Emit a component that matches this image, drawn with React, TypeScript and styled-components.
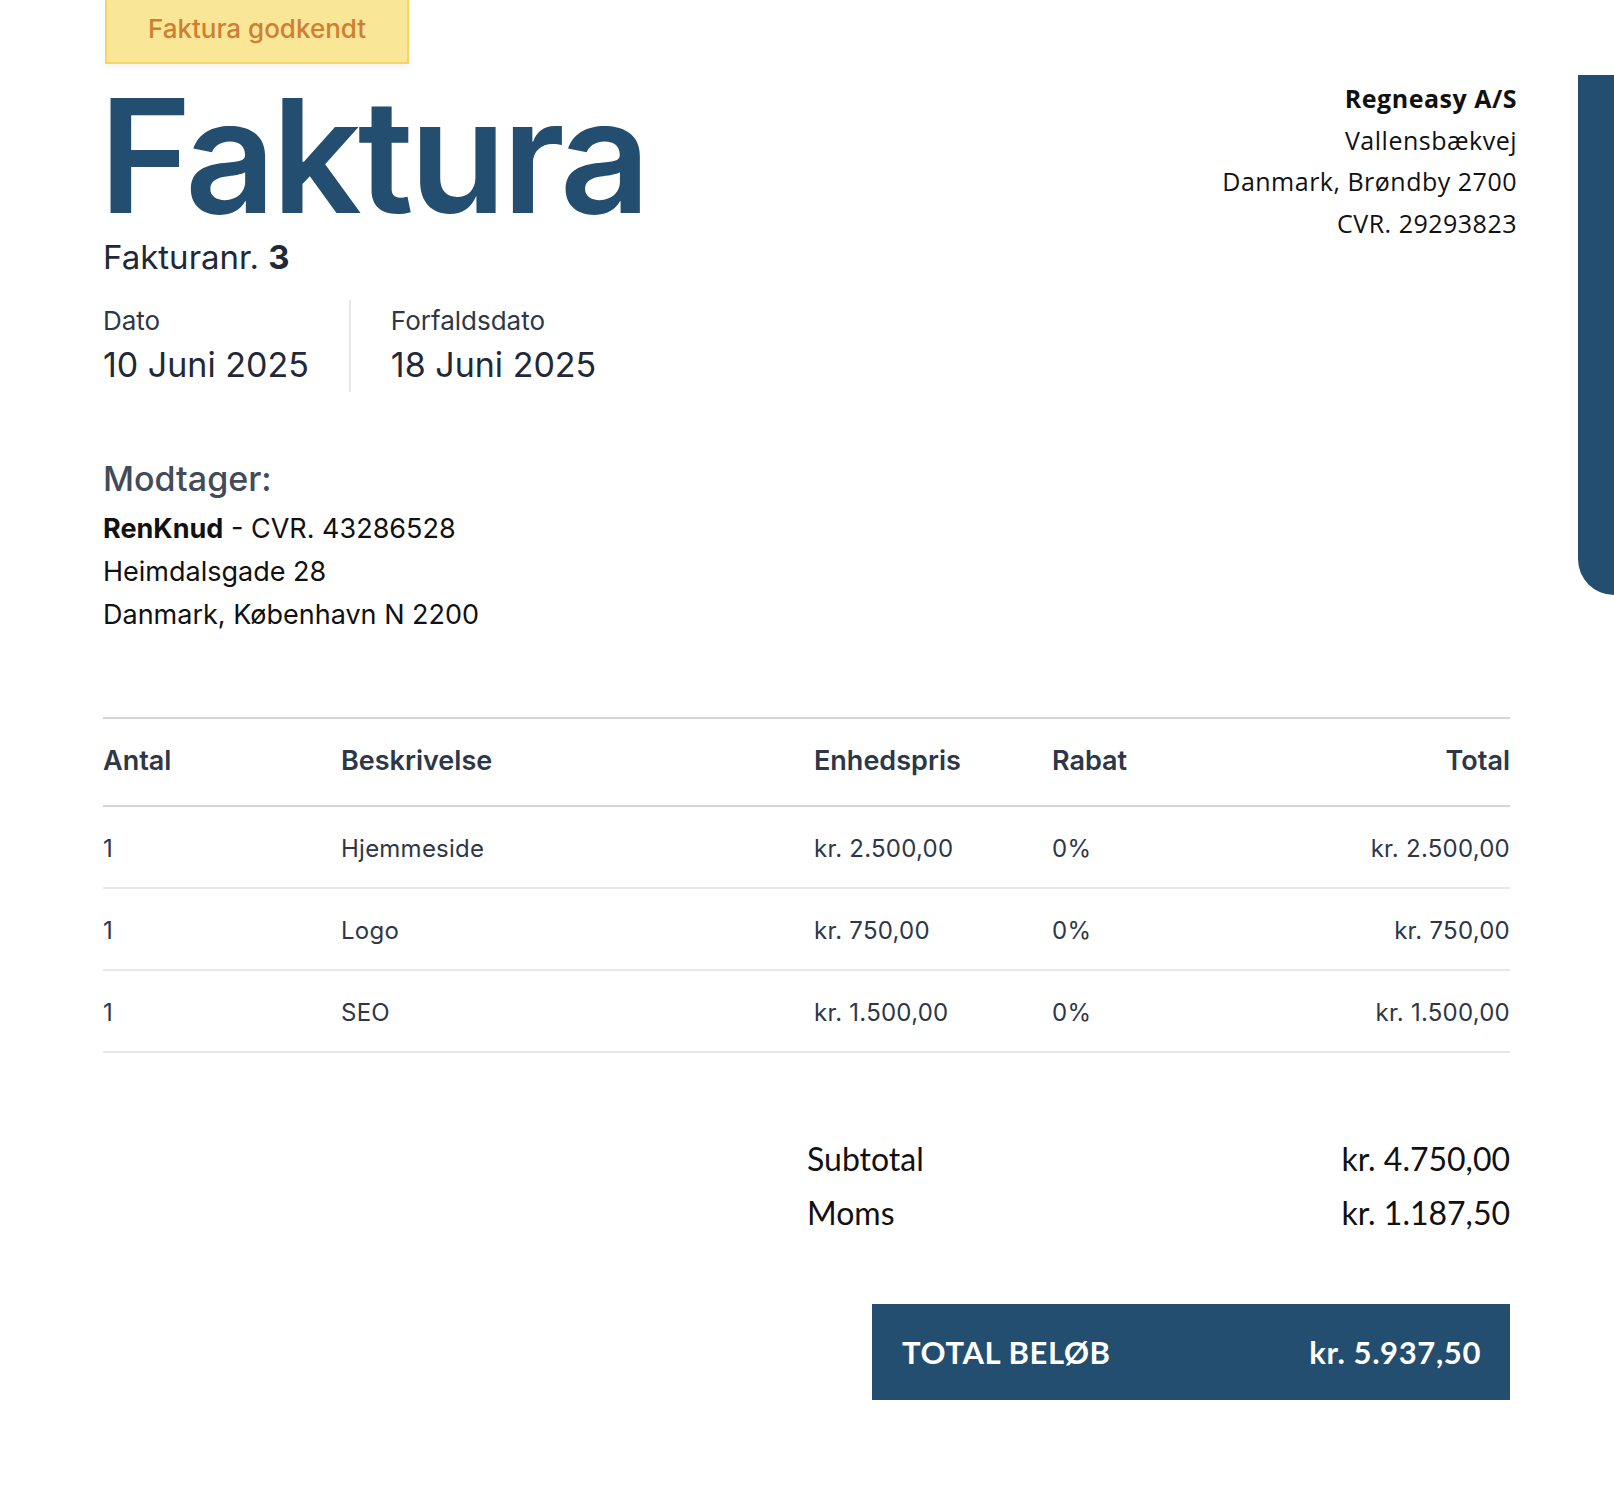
import styled, { createGlobalStyle } from "styled-components";

const navy = "#234e70";
const ink = "#2d3748";
const sans = `"Inter", "Liberation Sans", sans-serif`;
const geo = `"Open Sans", "Liberation Sans", sans-serif`;
const humanist = `"Lato", "Liberation Sans", sans-serif`;

const GlobalStyle = createGlobalStyle`
  * { box-sizing: border-box; }
  body {
    margin: 0;
    background: #fff;
    font-family: ${sans};
    color: ${ink};
  }
`;

const Page = styled.div`
  display: flex;
  align-items: flex-start;
  min-height: 1492px;
`;

const Sheet = styled.main`
  flex: 1;
  padding: 0 68px 92px 103px;
`;

const SideTab = styled.div`
  flex: none;
  width: 36px;
  height: 520px;
  margin-top: 75px;
  background: ${navy};
  border-bottom-left-radius: 40px;
`;

const Badge = styled.div`
  display: flex;
  align-items: center;
  justify-content: center;
  width: 304px;
  height: 64px;
  margin-left: 2px;
  padding-bottom: 6px;
  background: #f9e696;
  border: 2px solid #f5d565;
  border-top: 0;
  box-shadow: 0 3px 6px rgba(0, 0, 0, 0.05);
  color: #cf7f34;
  font-size: 26px;
  font-weight: 500;
`;

const Header = styled.header`
  display: flex;
  justify-content: space-between;
  align-items: flex-start;
  margin-top: 13px;
`;

const Title = styled.h1`
  margin: 0 0 0 -4px;
  font-size: 158px;
  line-height: 1;
  font-weight: 600;
  letter-spacing: -0.025em;
  color: ${navy};
`;

const InvoiceNo = styled.div`
  margin-top: 2px;
  font-size: 33px;
  line-height: 40px;
  color: #1f2937;

  b {
    font-weight: 700;
  }
`;

const Dates = styled.div`
  display: flex;
  margin-top: 23px;
`;

const DateCol = styled.div`
  padding: 4px 40px 5px;

  &:first-child {
    padding-left: 0;
  }

  & + & {
    border-left: 2px solid #e5e7eb;
  }
`;

const DateLabel = styled.div`
  font-size: 26px;
  line-height: 34px;
`;

const DateValue = styled.div`
  margin-top: 5px;
  font-size: 34px;
  line-height: 44px;
  color: #1f2937;
`;

const Company = styled.address`
  margin-top: 1px;
  margin-right: -7px;
  font-style: normal;
  text-align: right;
  font-family: ${geo};
  font-size: 25px;
  line-height: 41.5px;
  letter-spacing: 0.02em;
  color: #111;

  strong {
    font-weight: 700;
  }
`;

const Recipient = styled.section`
  margin-top: 65px;
`;

const RecipientHeading = styled.h2`
  margin: 0;
  font-size: 34px;
  line-height: 44px;
  font-weight: 500;
  color: #414b5a;
`;

const RecipientLines = styled.div`
  margin-top: 6px;
  font-size: 27px;
  line-height: 43px;
  color: #111;

  strong {
    font-weight: 700;
  }
`;

const Table = styled.div`
  margin-top: 81px;
  border-top: 2px solid #d1d5db;
`;

const Row = styled.div<{ $head?: boolean }>`
  display: grid;
  grid-template-columns: 238px 473px 238px 1fr 1fr;
  align-items: center;
  height: ${(p) => (p.$head ? "88px" : "82px")};
  padding: ${(p) => (p.$head ? "0 0 4px" : "2px 0 0")};
  border-bottom: 2px solid ${(p) => (p.$head ? "#d1d5db" : "#e5e7eb")};
  font-size: ${(p) => (p.$head ? "27px" : "24px")};
  font-weight: ${(p) => (p.$head ? 600 : 400)};
  letter-spacing: ${(p) => (p.$head ? "0" : "0.01em")};
  color: ${ink};
`;

const Cell = styled.div<{ $end?: boolean }>`
  text-align: ${(p) => (p.$end ? "right" : "left")};
`;

const Totals = styled.div`
  width: 703px;
  margin: 79px 0 0 auto;
  font-family: ${humanist};
  font-size: 32px;
  line-height: 54px;
  color: #111;
`;

const SumRow = styled.div`
  display: flex;
  justify-content: space-between;
`;

const TotalBox = styled.div`
  display: flex;
  justify-content: space-between;
  align-items: center;
  width: 638px;
  height: 96px;
  margin: 64px 0 0 auto;
  padding: 0 29px 0 30px;
  background: ${navy};
  color: #fff;
  font-family: ${humanist};
  font-size: 31px;
  font-weight: 700;
  letter-spacing: 0.02em;
`;

const lines = [
  { qty: 1, text: "Hjemmeside", price: "kr. 2.500,00", discount: "0%", total: "kr. 2.500,00" },
  { qty: 1, text: "Logo", price: "kr. 750,00", discount: "0%", total: "kr. 750,00" },
  { qty: 1, text: "SEO", price: "kr. 1.500,00", discount: "0%", total: "kr. 1.500,00" },
];

const App = () => {
  return (
    <>
      <GlobalStyle />
      <Page>
        <Sheet>
          <Badge>Faktura godkendt</Badge>
          <Header>
            <div>
              <Title>Faktura</Title>
              <InvoiceNo>
                Fakturanr. <b>3</b>
              </InvoiceNo>
              <Dates>
                <DateCol>
                  <DateLabel>Dato</DateLabel>
                  <DateValue>10 Juni 2025</DateValue>
                </DateCol>
                <DateCol>
                  <DateLabel>Forfaldsdato</DateLabel>
                  <DateValue>18 Juni 2025</DateValue>
                </DateCol>
              </Dates>
            </div>
            <Company>
              <strong>Regneasy A/S</strong>
              <div>Vallensbækvej</div>
              <div>Danmark, Brøndby 2700</div>
              <div>CVR. 29293823</div>
            </Company>
          </Header>

          <Recipient>
            <RecipientHeading>Modtager:</RecipientHeading>
            <RecipientLines>
              <div>
                <strong>RenKnud</strong> - CVR. 43286528
              </div>
              <div>Heimdalsgade 28</div>
              <div>Danmark, København N 2200</div>
            </RecipientLines>
          </Recipient>

          <Table>
            <Row $head>
              <Cell>Antal</Cell>
              <Cell>Beskrivelse</Cell>
              <Cell>Enhedspris</Cell>
              <Cell>Rabat</Cell>
              <Cell $end>Total</Cell>
            </Row>
            {lines.map((l) => (
              <Row key={l.text}>
                <Cell>{l.qty}</Cell>
                <Cell>{l.text}</Cell>
                <Cell>{l.price}</Cell>
                <Cell>{l.discount}</Cell>
                <Cell $end>{l.total}</Cell>
              </Row>
            ))}
          </Table>

          <Totals>
            <SumRow>
              <span>Subtotal</span>
              <span>kr. 4.750,00</span>
            </SumRow>
            <SumRow>
              <span>Moms</span>
              <span>kr. 1.187,50</span>
            </SumRow>
          </Totals>

          <TotalBox>
            <span>TOTAL BELØB</span>
            <span>kr. 5.937,50</span>
          </TotalBox>
        </Sheet>
        <SideTab />
      </Page>
    </>
  );
};

export default App;
